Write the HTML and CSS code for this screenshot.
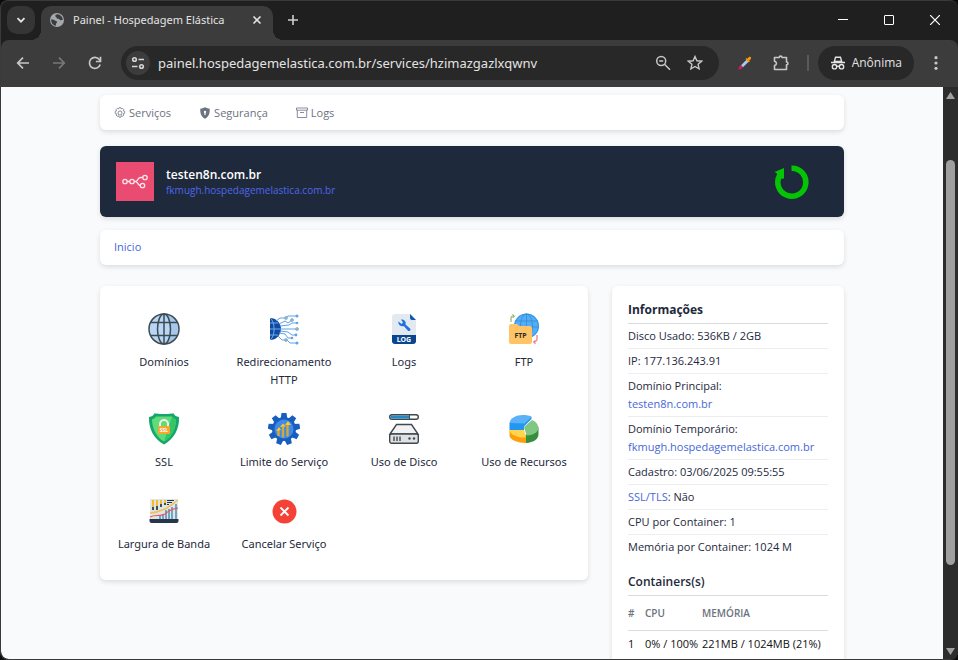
FILE: index.html
```html
<!DOCTYPE html>
<html lang="pt-BR">
<head>
<meta charset="utf-8">
<meta name="viewport" content="width=device-width, initial-scale=1">
<title>Painel - Hospedagem Elástica</title>
<link rel="stylesheet" href="styles.css">
</head>
<body>
<div class="window">
  <header class="tabstrip">
    <button class="tab-search" aria-label="Pesquisar guias"><svg width="12" height="12" viewBox="0 0 12 12"><path d="M2.500 4.200 6 7.700l3.500-3.500" fill="none" stroke="#e3e3e3" stroke-width="1.800"/></svg></button>
    <div class="tab">
      <svg width="16" height="16" viewBox="0 0 16 16"><circle cx="8" cy="8" r="7" fill="#a4a9ad"/><path d="M2 7.600c1.500-.4 3 .1 3.800.8.700.7 1.900.3 2.200 1.200.3 1-.9 1.300-.9 2.300 0 .7-.6 1.200-.6 2C4 13.300 2 11 2 7.600zM8.500 2.300c-1 .4-2.300.5-2.300 1.700 0 .9 1.300.6 1.300 1.600 0 .8.900 1.300 1.900 1.200 1.300-.1 1 1.200 2.200 1.500.9.200 1.400-.4 2.300-.1C13.700 5 11.500 2.600 8.500 2.300z" fill="#3c3c3c"/></svg>
      <span class="tab-title">Painel - Hospedagem Elástica</span>
      <button class="tab-close" aria-label="Fechar guia"><svg width="10" height="10" viewBox="0 0 10 10"><path d="M1.500 1.500l7 7m0-7-7 7" stroke="#e3e3e3" stroke-width="1.600"/></svg></button>
    </div>
    <button class="tab-new" aria-label="Nova guia"><svg width="12" height="12" viewBox="0 0 12 12"><path d="M6 1v10M1 6h10" stroke="#d0d0d0" stroke-width="1.600"/></svg></button>
    <div class="controls">
      <button class="control" aria-label="Minimizar"><svg width="10" height="10" viewBox="0 0 10 10"><path d="M0 4.500h10" stroke="#fff"/></svg></button>
      <button class="control" aria-label="Maximizar"><svg width="10" height="10" viewBox="0 0 10 10"><rect x=".5" y=".5" width="9" height="9" rx=".5" fill="none" stroke="#fff"/></svg></button>
      <button class="control" aria-label="Fechar"><svg width="10" height="10" viewBox="0 0 10 10"><path d="M0 0l10 10M10 0 0 10" stroke="#fff" stroke-width="1.200"/></svg></button>
    </div>
  </header>

  <div class="toolbar">
    <button class="tool" aria-label="Voltar"><svg width="16" height="16" viewBox="0 0 16 16"><path d="M14 8H3M8 2.700 2.700 8 8 13.300" fill="none" stroke="#c7c7c7" stroke-width="1.700"/></svg></button>
    <button class="tool" aria-label="Avançar"><svg width="16" height="16" viewBox="0 0 16 16"><path d="M2 8h11M8 2.700 13.300 8 8 13.300" fill="none" stroke="#777" stroke-width="1.700"/></svg></button>
    <button class="tool" aria-label="Recarregar"><svg width="16" height="16" viewBox="0 0 16 16"><path d="M13.200 9.500A5.500 5.500 0 1 1 12.300 4.500L13.500 6" fill="none" stroke="#c7c7c7" stroke-width="1.700"/><path d="M13.500 1.800v4.700H8.900" fill="none" stroke="#c7c7c7" stroke-width="1.700"/></svg></button>
    <div class="omnibox">
      <button class="site-info" aria-label="Informações do site"><svg width="14" height="14" viewBox="0 0 14 14" fill="none" stroke="#d5d5d5" stroke-width="1.600"><circle cx="3.500" cy="3.500" r="1.800"/><path d="M7.500 3.500H13M1 10.500h5.500"/><circle cx="10.500" cy="10.500" r="1.800"/></svg></button>
      <input class="url" type="text" aria-label="Endereço" value="painel.hospedagemelastica.com.br/services/hzimazgazlxqwnv">
      <button class="mini" aria-label="Zoom"><svg width="16" height="16" viewBox="0 0 16 16" fill="none" stroke="#c7c7c7" stroke-width="1.500"><circle cx="6.200" cy="6" r="4.500"/><path d="M9.500 9.300 15 14.800M4.200 6h4"/></svg></button>
      <button class="mini" aria-label="Favoritar"><svg width="16" height="16" viewBox="0 0 16 16"><path d="m8 1.500 1.900 4.300 4.700.4-3.500 3.100 1 4.600L8 11.500l-4.100 2.400 1-4.600L1.400 6.200l4.700-.4z" fill="none" stroke="#c7c7c7" stroke-width="1.400"/></svg></button>
    </div>
    <button class="tool" aria-label="Conta-gotas"><svg width="16" height="16" viewBox="0 0 16 16"><path d="M4 10.200 9.500 4.700l2 2L6 12.200z" fill="#a9c8f5"/><path d="M1.300 14.700 2.600 11 4 10.200l2 2L5 13.500z" fill="#d81b60"/><path d="m8.500 4 1-.9.900.6 1.500-1.600c1.600-.9 2.800.5 1.900 1.900l-1.600 1.700.6.900-1 1z" fill="#ff9800"/></svg></button>
    <button class="tool" aria-label="Extensões"><svg width="18" height="18" viewBox="0 0 18 18"><path d="M2.500 3.500h4.700c0-1.900 2.800-1.900 2.800 0h4.500v4.500c1.900 0 1.900 2.800 0 2.800v4.700h-12v-4c2.600-.6 2.600-3.600 0-4.200z" fill="none" stroke="#c7c7c7" stroke-width="1.600" stroke-linejoin="round"/></svg></button>
    <span class="divider"></span>
    <button class="incognito"><svg width="16" height="16" viewBox="0 0 16 16"><path d="M5 1.500h6L12.500 7h-9z" fill="#e3e3e3"/><path d="M6 3h4l.7 2.700H5.300z" fill="#282828"/><path d="M1 7.500h14" stroke="#e3e3e3" stroke-width="1.500"/><g fill="none" stroke="#e3e3e3" stroke-width="1.400"><circle cx="4.500" cy="11.700" r="2.200"/><circle cx="11.500" cy="11.700" r="2.200"/><path d="M6.700 11.300h2.600"/></g></svg><span>Anônima</span></button>
    <button class="tool" aria-label="Mais"><svg width="16" height="16" viewBox="0 0 16 16" fill="#c7c7c7"><circle cx="8" cy="2.700" r="1.600"/><circle cx="8" cy="8" r="1.600"/><circle cx="8" cy="13.300" r="1.600"/></svg></button>
  </div>

  <div class="viewport">
    <div class="page">
      <div class="container">
        <nav class="card menu">
          <a href="#"><svg width="12" height="12" viewBox="0 0 12 12" fill="none" stroke="#6b7280" stroke-width=".8"><circle cx="6" cy="6" r="2"/><path d="M5.100.7h1.800l.4 1.200 1.200-.6 1.300 1.300-.6 1.200 1.500.5v1.900l-1.500.6.7 1.200-1.300 1.300-1.200-.6-.5 1.500H5.100l-.6-1.500-1.200.6L2 8l.6-1.200-1.400-.6V4.300l1.400-.5L2 2.600l1.300-1.300 1.200.6z"/></svg>Serviços</a>
          <a href="#"><svg width="12" height="12" viewBox="0 0 12 12"><path d="M6 .3c1.600.9 3 1.300 4.700 1.400.3 4.700-1 8-4.700 10C2.300 9.700 1 6.400 1.300 1.700 3 1.600 4.400 1.200 6 .3z" fill="#6b7280"/><path d="M6 3.700a1.200 1.200 0 0 1 .5 2.300l.4 1.800H5.100L5.500 6A1.200 1.200 0 0 1 6 3.700z" fill="#fff"/></svg>Segurança</a>
          <a href="#"><svg width="12" height="12" viewBox="0 0 12 12" fill="none" stroke="#6b7280" stroke-width=".8"><path d="M.5 1h11v2.200H.5zM1.300 3.200v7.300h9.400V3.200M4 5.500h4"/></svg>Logs</a>
        </nav>

        <section class="banner">
          <svg class="logo" width="38" height="39" viewBox="0 0 38 39"><path fill="#ea4b71" d="M0 0h38v39H0z"/><g fill="none" stroke="#ffe3ea" stroke-width="1.300"><circle cx="9" cy="19.500" r="2.200"/><circle cx="16" cy="19.500" r="2.200"/><circle cx="29" cy="15.500" r="2.200"/><circle cx="26.500" cy="23.500" r="2.200"/><path d="M11.200 19.500h2.600M18.200 19.500h1.300c3.500 0 1.200-4 5-4h2.300M19.500 19.500c2.500 0 2 4 4.800 4"/></g></svg>
          <div class="identity">
            <h1>testen8n.com.br</h1>
            <a href="#">fkmugh.hospedagemelastica.com.br</a>
          </div>
          <button class="restart" aria-label="Reiniciar"><svg width="36" height="36" viewBox="0 0 36 36"><path d="M18.500 4.200A14 14 0 1 1 7 10.700" fill="none" stroke="#04c404" stroke-width="5.500"/><path d="M1.500 8 11 4v10.500L3.500 15.500 4 9.500z" fill="#04c404"/></svg></button>
        </section>

        <nav class="card menu crumbs"><a href="#">Inicio</a></nav>

        <div class="columns">
          <main class="card services">
            <a href="#"><svg viewBox="0 0 32 32"><circle cx="16" cy="16" r="15" fill="#b9d7f5"/><path d="M16 2c9 2 9 26 0 28 8 0 14-6 14-14S24 2 16 2z" fill="#a5c7ec"/><g fill="none" stroke="#3d4a52" stroke-width="1.500"><circle cx="16" cy="16" r="15"/><ellipse cx="16" cy="16" rx="6.500" ry="15"/><path d="M16 1v30M3 9.500h26M3 22.500h26"/></g></svg>Domínios</a>
            <a href="#"><svg viewBox="0 0 32 32"><path d="M2 5a11 11 0 0 1 0 22z" fill="#114a9e"/><path d="M2 10h8M2 16h11M2 22h8M2 5c5 3 6 18 0 22" fill="none" stroke="#6aaaf5"/><g fill="none" stroke="#5da2ec" stroke-width="1"><path d="M8 8l4-3h5l3-2h9M11 11l6-3 3 2 4-3M12 13l9-1 3-2h5M13 16h16M12 18l8 1 4 3h5M11 20l6 1 3 4h4M10 23l4 4h5l3 3h7"/></g><g fill="#b6b488" stroke="#6aaaf5" stroke-width=".7"><circle cx="18" cy="5" r="1.500"/><circle cx="24" cy="7" r="1.500"/><circle cx="29" cy="16" r="1.500"/><circle cx="18" cy="27" r="1.500"/></g><g fill="#5da2ec"><circle cx="29" cy="3" r="1.500"/><circle cx="29" cy="10" r="1.300"/><circle cx="28" cy="22" r="1.400"/><circle cx="24" cy="25" r="1.300"/><circle cx="29" cy="30" r="1.500"/></g></svg>Redirecionamento HTTP</a>
            <a href="#"><svg viewBox="0 0 32 32"><path d="M7 1h15l6 6v16H4V4a3 3 0 0 1 3-3z" fill="#e3e9f0"/><path d="M22 1l6 6h-4a2 2 0 0 1-2-2z" fill="#0d56b5"/><path d="M4 22h24v6a3 3 0 0 1-3 3H7a3 3 0 0 1-3-3z" fill="#0a468f"/><path d="M10.500 8.500l3 2.500 1.500-1.500-2-3c3-.5 5.500 2 4.500 5l4.500 4c1.500 1.500-.7 3.500-2.200 2l-4-4.500c-3 1-6-1.500-5.300-4.500z" fill="#1f6fe0"/><text x="16" y="29" text-anchor="middle" class="glyph-log">LOG</text></svg>Logs</a>
            <a href="#"><svg viewBox="0 0 32 32"><circle cx="18.500" cy="13" r="12.500" fill="#55aef3"/><g fill="none" stroke="#2f8bdd" stroke-width=".8"><circle cx="18.500" cy="13" r="12"/><ellipse cx="18.500" cy="13" rx="6" ry="12"/><path d="M18.500 1v24M7 8h23M6 14h25"/></g><path d="M1 13a2 2 0 0 1 2-2h6l2 2h11a2 2 0 0 1 2 2v14a2 2 0 0 1-2 2H3a2 2 0 0 1-2-2z" fill="#ffc466"/><path d="M3 9V5c0-2 1-2 3-2M4.500 1.500 6.500 3l-2 2" fill="none" stroke="#79a848"/><path d="M29 22v4c0 2-1 3-3 3M27.500 27 25.500 29l2 2" fill="none" stroke="#e15961"/><text x="12.500" y="24.500" text-anchor="middle" class="glyph-ftp">FTP</text></svg>FTP</a>
            <a href="#"><svg viewBox="0 0 32 32"><path d="M16 1c5 0 7-.5 10-.5 0 2 2 3 5 3.500.5 12-5 22-15 27.500C6 26 .5 16 1 4 4 3.500 6 2.500 6 .5c3 0 5 .5 10 .5z" fill="#14a66a"/><path d="M16 3.500h8c1 1.500 2 2 4 2.700C28 15 24 24 16 28.500 8 24 4 15 4 6.200c2-.7 3-1.200 4-2.700z" fill="#5edc78"/><path d="M16 28.500C24 24 28 15 28 6.200c-2-.7-3-1.200-4-2.700z" fill="#35c566"/><path d="M12 14v-3a4 4 0 0 1 8 0v3" fill="none" stroke="#f1f1e8" stroke-width="2"/><rect x="10" y="13" width="12" height="8" rx="1" fill="#f5a82d"/><text x="16" y="19" text-anchor="middle" class="glyph-ssl">SSL</text></svg>SSL</a>
            <a href="#"><svg viewBox="0 0 32 32"><g fill="#165fc1"><path id="tooth" d="M13.500 0h5l1 7h-7z"/><use href="#tooth" transform="rotate(40 16 16)"/><use href="#tooth" transform="rotate(80 16 16)"/><use href="#tooth" transform="rotate(120 16 16)"/><use href="#tooth" transform="rotate(160 16 16)"/><use href="#tooth" transform="rotate(200 16 16)"/><use href="#tooth" transform="rotate(240 16 16)"/><use href="#tooth" transform="rotate(280 16 16)"/><use href="#tooth" transform="rotate(320 16 16)"/><circle cx="16" cy="16" r="12"/></g><circle cx="16" cy="16" r="9.500" fill="#408be6"/><path d="M10.500 23v-6M15 24.500V14M19.500 23.500V12" stroke="#d5a935" stroke-width="2.400"/><path d="m8 18 3-4 2 3zM12 14l3-3.500 3 3zM17 12l3-4 3 4z" fill="#ffc727"/></svg>Limite do Serviço</a>
            <a href="#"><svg viewBox="0 0 32 32"><rect x="1.700" y="1.700" width="28.600" height="4.600" rx="2.300" fill="#fff" stroke="#41484c" stroke-width="1.400"/><path d="M4 2.400h17v3.200H4a1.500 1.500 0 0 1 0-3.200z" fill="#2489c9"/><path d="M21.500 2v4" stroke="#41484c"/><g stroke="#41484c" stroke-width="1.400"><path d="M2 21 8.500 11.500h15L30 21z" fill="#f0f2f3"/><rect x="1.700" y="21" width="28.600" height="9.300" rx="2" fill="#dfe2e4"/><path d="M6 23.500v4.500M9 23.500v4.500M12 23.500v4.500"/></g><circle cx="21.500" cy="25.500" r="1.200" fill="#41484c"/><circle cx="26" cy="25.500" r="1.200" fill="#41484c"/></svg>Uso de Disco</a>
            <a href="#"><svg viewBox="0 0 32 32"><path d="M1.500 10v7H16V10z" fill="#2196f3"/><path d="M1.500 10C2 5 8 2 15 2c3.500 0 6 .5 8.500 1.500L16 10.500z" fill="#5cb2f8"/><path d="M16 10.500 23.500 3.500V6L16 13.500z" fill="#2196f3"/><path d="M18 21v9c8-.5 12.500-4 12.500-9v-7z" fill="#388e3c"/><path d="M16 14 24 7c7 3 8 9 4 12.500-2.500 2-6 3-9.500 3z" fill="#81c784"/><path d="M1.500 17v6c1 4 8 7 16.500 7v-8z" fill="#ff9e0b"/><path d="M1.500 17H16l2 7.500C9 25 2 21.500 1.500 17z" fill="#ffd54f"/></svg>Uso de Recursos</a>
            <a href="#"><svg viewBox="0 0 32 32"><path d="M2 4h28v21H2z" fill="#e2e3e4"/><path d="M1.500 24h29v2a2 2 0 0 1-2 2h-25a2 2 0 0 1-2-2z" fill="#27364b"/><path d="M5 5v8M9 5v6M13 5v4M17 5v3" stroke="#f0bd24" stroke-width="2"/><path d="M5 12v3M9 11v4M13 9v3M17 8v2" stroke="#34506b" stroke-width="2"/><path d="M19 5.500h7M19 7.500h5M19 9.500h2" stroke="#243345" stroke-width="1.200"/><path d="M12 20v4M15 19v5M18 15v9M21 14v10M24 12v12M28 9v15" stroke="#4992b9" stroke-width="1.500"/><path d="M2 18c5 0 8-1 12-3 5-1 8-4 16-10" fill="none" stroke="#efc34a" stroke-width="1.500"/><path d="M2 22c5-3 10 0 15-3 5-5 8-5 13-6" fill="none" stroke="#ed5261" stroke-width="1.200"/></svg>Largura de Banda</a>
            <a href="#"><svg viewBox="0 0 32 32"><circle cx="16.500" cy="16.500" r="12" fill="#f44336"/><path d="m12.500 12.500 8 8m0-8-8 8" stroke="#fff" stroke-width="1.800"/></svg>Cancelar Serviço</a>
          </main>

          <aside class="card info">
            <h2>Informações</h2>
            <ul>
              <li>Disco Usado: 536KB / 2GB</li>
              <li>IP: 177.136.243.91</li>
              <li>Domínio Principal:<br><a href="#">testen8n.com.br</a></li>
              <li>Domínio Temporário:<br><a href="#">fkmugh.hospedagemelastica.com.br</a></li>
              <li>Cadastro: 03/06/2025 09:55:55</li>
              <li><a href="#">SSL/TLS</a>: Não</li>
              <li>CPU por Container: 1</li>
              <li>Memória por Container: 1024 M</li>
            </ul>
            <h3>Containers(s)</h3>
            <table>
              <thead><tr><th>#</th><th>CPU</th><th>MEMÓRIA</th></tr></thead>
              <tbody><tr><td>1</td><td>0% / 100%</td><td>221MB / 1024MB (21%)</td></tr></tbody>
            </table>
          </aside>
        </div>
      </div>
    </div>
    <div class="scrollbar">
      <svg width="9" height="7" viewBox="0 0 9 7"><path d="M4.500 0 9 7H0z" fill="#9f9f9f"/></svg>
      <div class="track"><div class="thumb"></div></div>
      <svg width="9" height="7" viewBox="0 0 9 7"><path d="M4.500 7 9 0H0z" fill="#9f9f9f"/></svg>
    </div>
  </div>
</div>
</body>
</html>
```
FILE: styles.css
```css
* {
  box-sizing: border-box;
}

body {
  margin: 0;
  height: 100vh;
  background: #0c0c0c;
  font: 11px/18px "Noto Sans", "Open Sans", sans-serif;
  color: #1e293b;
}

a {
  color: #4668d9;
  text-decoration: none;
}

button {
  display: flex;
  align-items: center;
  justify-content: center;
  flex: none;
  padding: 0;
  border: 0;
  background: none;
  font: inherit;
  color: #e3e3e3;
}

svg {
  flex: none;
}

.window {
  display: flex;
  flex-direction: column;
  height: 100%;
  border: 1px solid #3a3a3a;
  border-right: 0;
  border-radius: 8px;
  overflow: hidden;
  background: #1f1f1f;
}

/* Tab strip */
.tabstrip {
  display: flex;
  flex: none;
  height: 39px;
  padding: 5px 0 0 6px;
}

.tab-search {
  width: 28px;
  height: 28px;
  margin-right: 6px;
  border-radius: 10px;
  background: #353535;
}

.tab {
  position: relative;
  display: flex;
  align-items: center;
  gap: 8px;
  width: 232px;
  padding: 0 8px 6px;
  border-radius: 10px 10px 0 0;
  background: #3c3c3c;
  color: #e3e3e3;
}

.tab::before,
.tab::after {
  content: "";
  position: absolute;
  bottom: 0;
  width: 10px;
  height: 10px;
}

.tab::before {
  right: 100%;
  background: radial-gradient(circle at 0 0, transparent 10px, #3c3c3c 10px);
}

.tab::after {
  left: 100%;
  background: radial-gradient(circle at 100% 0, transparent 10px, #3c3c3c 10px);
}

.tab-title {
  flex: 1;
  white-space: nowrap;
}

.tab-close {
  width: 16px;
  height: 16px;
}

.tab-new {
  width: 28px;
  height: 28px;
  margin-left: 6px;
}

.controls {
  display: flex;
  margin-left: auto;
}

.control {
  width: 46px;
  height: 28px;
}

/* Toolbar */
.toolbar {
  display: flex;
  align-items: center;
  flex: none;
  height: 47px;
  padding: 0 4px 1px;
  border-radius: 8px 8px 0 0;
  background: #3c3c3c;
}

.tool {
  width: 36px;
  height: 34px;
}

.omnibox {
  display: flex;
  align-items: center;
  flex: 1;
  height: 34px;
  margin: 0 8px;
  padding: 0 8px 0 5px;
  border-radius: 17px;
  background: #282828;
}

.site-info {
  width: 24px;
  height: 24px;
  border-radius: 50%;
  background: #3c3c3c;
}

.url {
  flex: 1;
  min-width: 0;
  padding: 0 8px;
  border: 0;
  outline: 0;
  background: none;
  font: 13px/20px "Noto Sans", "Open Sans", sans-serif;
  color: #e3e3e3;
}

.mini {
  width: 32px;
  height: 32px;
}

.divider {
  width: 2px;
  height: 16px;
  margin: 0 9px 0 8px;
  background: #5a5a5a;
}

.incognito {
  gap: 6px;
  height: 34px;
  margin-right: 4px;
  padding: 0 12px;
  border-radius: 17px;
  background: #282828;
  font-family: "Open Sans", "Noto Sans", sans-serif;
  font-size: 12px;
}

/* Page area */
.viewport {
  display: flex;
  flex: 1;
  min-height: 0;
  background: #2c2c2c;
}

.page {
  flex: 1;
  overflow: hidden;
  padding-top: 8px;
  border-bottom-left-radius: 8px;
  background: #f9fafc;
}

.container {
  max-width: 744px;
  margin: 0 auto;
}

.card {
  border-radius: 6px;
  background: #fff;
  box-shadow: 0 2px 5px rgba(0, 0, 0, 0.12);
}

.menu {
  display: flex;
  gap: 28px;
  padding: 9px 14px 8px;
  font-family: "Open Sans", "Noto Sans", sans-serif;
  font-weight: 500;
}

.menu a {
  display: flex;
  align-items: center;
  gap: 3px;
  color: #6b7280;
}

.menu.crumbs {
  padding: 8px 14px 9px;
}

.menu.crumbs a {
  color: #4668d9;
}

.banner {
  display: flex;
  align-items: center;
  gap: 12px;
  margin: 16px 0 13px;
  padding: 16px;
  border-radius: 6px;
  background: #1e293b;
  box-shadow: 0 2px 5px rgba(0, 0, 0, 0.12);
}

.identity {
  flex: 1;
  font-family: "Open Sans", "Noto Sans", sans-serif;
}

.identity h1 {
  margin: 0;
  font-size: 12px;
  line-height: 16px;
  font-weight: 600;
  color: #fff;
}

.identity a {
  display: block;
  font-size: 10px;
  line-height: 14px;
  color: #4e67e8;
}

.restart {
  width: 36px;
  height: 36px;
  margin-right: 19px;
}

.columns {
  display: grid;
  grid-template-columns: minmax(0, 1fr) 232px;
  gap: 24px;
  align-items: start;
  margin-top: 21px;
}

.services {
  display: grid;
  grid-template-columns: repeat(4, 1fr);
  row-gap: 24px;
  padding: 27px 4px;
}

.services a {
  display: flex;
  flex-direction: column;
  align-items: center;
  gap: 8px;
  padding: 0 12px;
  text-align: center;
  color: #1e293b;
}

.services svg {
  width: 32px;
  height: 32px;
}

.glyph-log {
  font: bold 7px "Noto Sans", sans-serif;
  fill: #fff;
}

.glyph-ftp {
  font: bold 7px "Noto Sans", sans-serif;
  fill: #2b2b2b;
}

.glyph-ssl {
  font: bold 5px "Noto Sans", sans-serif;
  fill: #fff;
}

/* Side panel */
.info {
  padding: 14px 16px;
  font-family: "Open Sans", "Noto Sans", sans-serif;
}

.info h2,
.info h3 {
  margin: 0;
  padding-bottom: 4px;
  border-bottom: 1px solid #d9dcdf;
  font-size: 12px;
  line-height: 19px;
  font-weight: 700;
}

.info h3 {
  margin-top: 13px;
  font-weight: 600;
}

.info ul {
  margin: 0;
  padding: 0;
  list-style: none;
}

.info li {
  padding: 3px 0;
  border-bottom: 1px solid #eceeef;
}

.info li:last-child {
  border-bottom: 0;
}

.info table {
  width: 100%;
  border-collapse: collapse;
  white-space: nowrap;
  color: #111;
}

.info th {
  padding: 8px 0;
  border-bottom: 1px solid #d9dcdf;
  font-size: 10px;
  font-weight: 600;
  text-align: left;
  color: #6b7280;
}

.info td {
  padding: 4px 0;
}

.info th:nth-child(1) {
  width: 17px;
}

.info th:nth-child(2) {
  width: 57px;
}

/* Scrollbar */
.scrollbar {
  display: flex;
  flex-direction: column;
  align-items: center;
  width: 15px;
  padding: 5px 0 4px;
}

.track {
  flex: 1;
  padding-top: 61px;
}

.thumb {
  width: 9px;
  height: 83%;
  border-radius: 5px;
  background: #9f9f9f;
}
```
